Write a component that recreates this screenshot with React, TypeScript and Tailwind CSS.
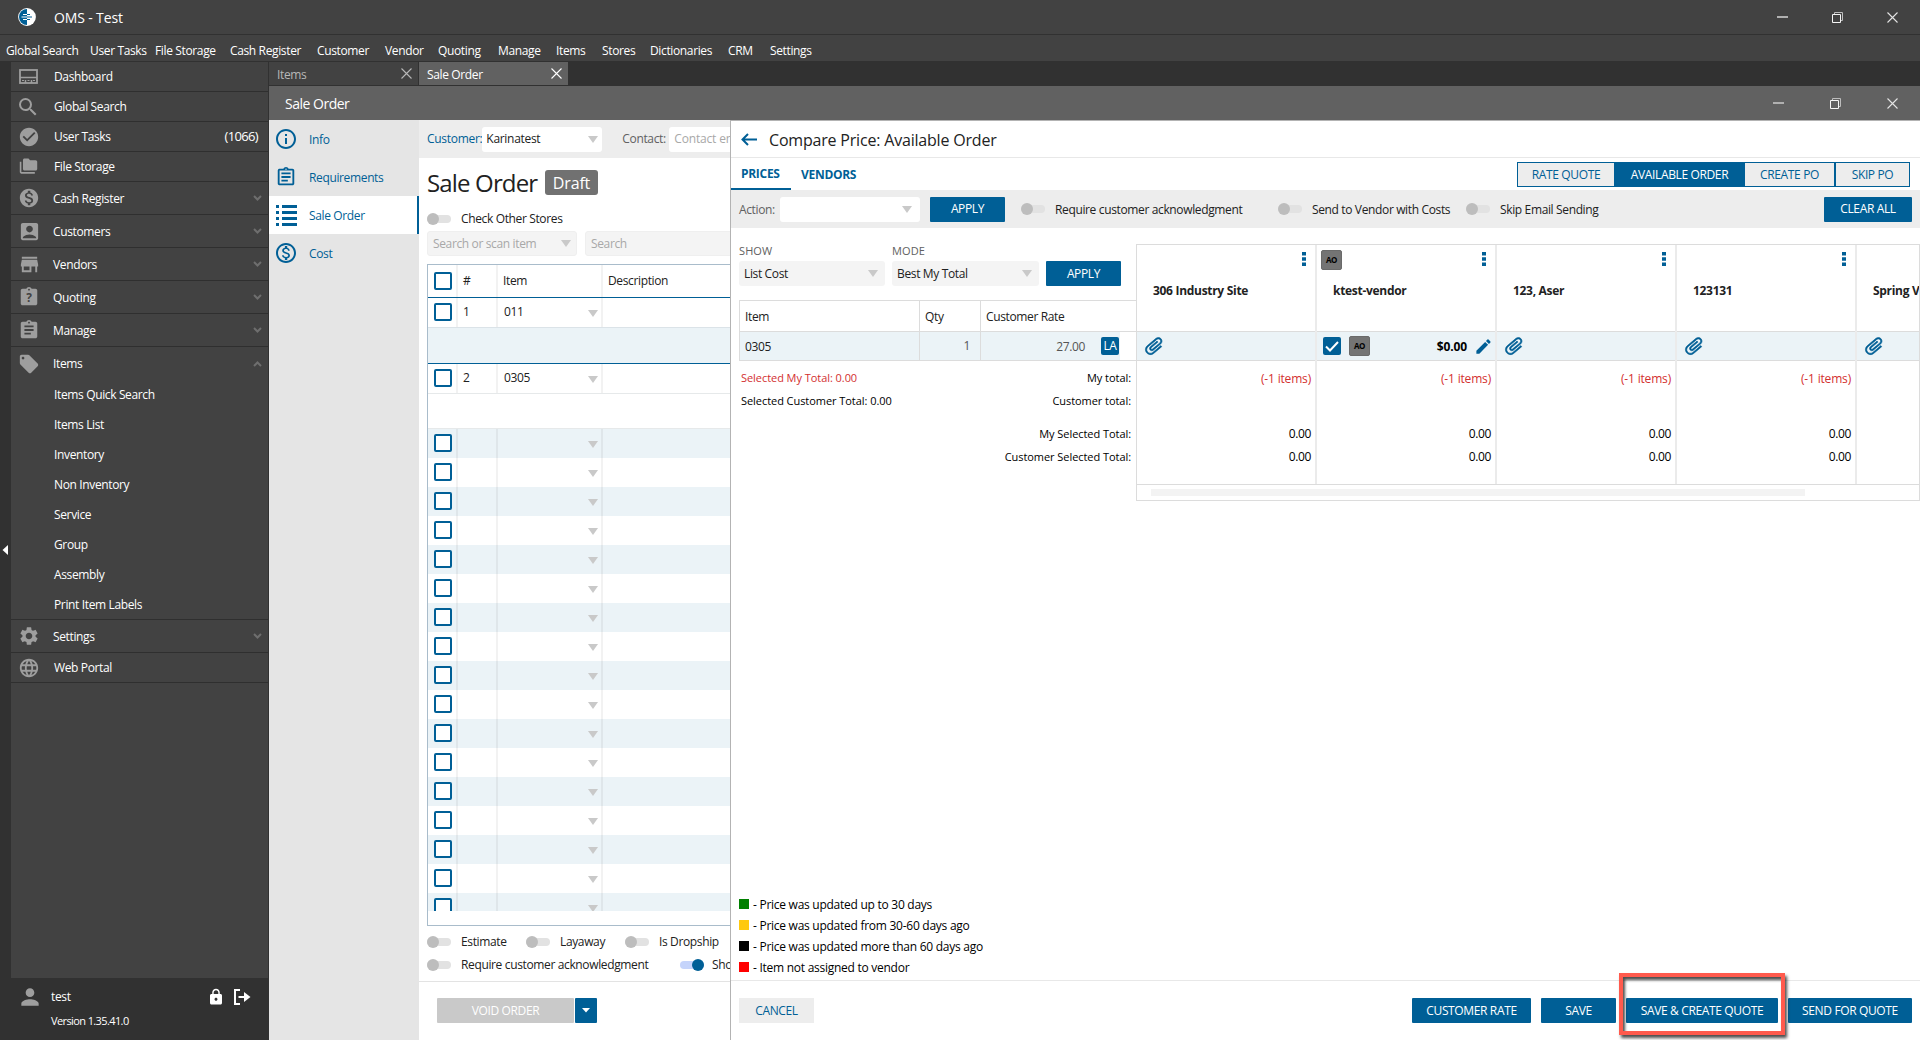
import type { ReactNode } from "react";
import clsx from "clsx";
import {
  MdSearch,
  MdCheckCircle,
  MdFolderCopy,
  MdMonetizationOn,
  MdAccountBox,
  MdStore,
  MdAssignment,
  MdLocalOffer,
  MdSettings,
  MdLanguage,
  MdInfoOutline,
  MdOutlineAssignment,
  MdOutlineMonetizationOn,
  MdPerson,
  MdLock,
  MdEdit,
} from "react-icons/md";

const MENU = [
  { label: "Global Search", width: "w-[84px]" },
  { label: "User Tasks", width: "w-[65px]" },
  { label: "File Storage", width: "w-[75px]" },
  { label: "Cash Register", width: "w-[87px]" },
  { label: "Customer", width: "w-[68px]" },
  { label: "Vendor", width: "w-[53px]" },
  { label: "Quoting", width: "w-[60px]" },
  { label: "Manage", width: "w-[58px]" },
  { label: "Items", width: "w-[46px]" },
  { label: "Stores", width: "w-[48px]" },
  { label: "Dictionaries", width: "w-[78px]" },
  { label: "CRM", width: "w-[42px]" },
  { label: "Settings", width: "w-[60px]" },
];

const ITEM_LINKS = [
  "Items Quick Search",
  "Items List",
  "Inventory",
  "Non Inventory",
  "Service",
  "Group",
  "Assembly",
  "Print Item Labels",
];

type Vendor = { name: string; selected?: boolean };

const VENDORS: Vendor[] = [
  { name: "306 Industry Site" },
  { name: "ktest-vendor", selected: true },
  { name: "123, Aser" },
  { name: "123131" },
];

const LEGEND = [
  { color: "bg-[#008000]", text: "- Price was updated up to 30 days" },
  { color: "bg-[#ffc90e]", text: "- Price was updated from 30-60 days ago" },
  { color: "bg-black", text: "- Price was updated more than 60 days ago" },
  { color: "bg-[#ff0000]", text: "- Item not assigned to vendor" },
];

function DashboardIcon() {
  return (
    <svg width="19" height="15" viewBox="0 0 19 15" fill="none" stroke="currentColor">
      <rect x="1" y="1" width="17" height="13" strokeWidth="1.8" />
      <path d="M1 8.500h17M6.500 11v3M12.500 11v3" strokeWidth="1.500" />
      <path d="M3 11.500h2M8.500 11.500h2M14 11.500h2" strokeWidth="1.200" />
    </svg>
  );
}

function QuotingIcon() {
  return (
    <svg width="22" height="22" viewBox="0 0 24 24" fill="currentColor">
      <path d="M19 3h-4.180C14.400 1.840 13.300 1 12 1c-1.300 0-2.400.840-2.820 2H5c-1.100 0-2 .900-2 2v14c0 1.100.900 2 2 2h14c1.100 0 2-.900 2-2V5c0-1.100-.900-2-2-2zm-7 0c.550 0 1 .450 1 1s-.450 1-1 1-1-.450-1-1 .450-1 1-1z" />
      <text x="12" y="17.500" textAnchor="middle" fontSize="13" fontWeight="700" fill="#424242">?</text>
    </svg>
  );
}

function ListIcon() {
  return (
    <svg width="21" height="21" viewBox="0 0 21 21" fill="currentColor">
      {[0, 6, 12, 18].map((y) => (
        <g key={y}>
          <rect x="0" y={y} width="3" height="3" />
          <rect x="6" y={y} width="15" height="3" />
        </g>
      ))}
    </svg>
  );
}

function LogoutIcon() {
  return (
    <svg width="17" height="16" viewBox="0 0 17 16" fill="none" stroke="currentColor" strokeWidth="2">
      <path d="M6 1H1v14h5" />
      <path d="M4.500 8H13" />
      <path d="M10 3 16.500 8 10 13z" fill="currentColor" stroke="none" />
    </svg>
  );
}

function LogoIcon() {
  return (
    <svg width="18" height="18" viewBox="0 0 18 18">
      <circle cx="9" cy="9" r="8.900" fill="#fff" />
      <path d="M9 1a8 8 0 0 0 0 16z" fill="#005f96" />
      <path d="M5 6.500h4M3.500 9H9M5 11.500h4" stroke="#fff" strokeWidth="1.200" />
      <path d="M9 6.500h3M9 9h5M9 11.500h3" stroke="#005f96" strokeWidth="1.200" />
    </svg>
  );
}

function CloseIcon() {
  return (
    <svg width="11" height="11" viewBox="0 0 11 11" stroke="currentColor" strokeWidth="1.100">
      <path d="M.5.5l10 10M10.500.5l-10 10" />
    </svg>
  );
}

function WindowButtons({ inner }: { inner?: boolean }) {
  return (
    <div className="ml-auto flex items-center pr-[22px] text-[#e4e4e4]">
      <span className={clsx("h-[2px] w-[11px] bg-[#b0b0b0]", inner ? "mr-[46px]" : "mr-[44px]")} />
      <svg
        width="11"
        height="11"
        viewBox="0 0 11 11"
        fill="none"
        stroke="#f5f5f5"
        className={inner ? "mr-[46px]" : "mr-[44px]"}
      >
        <path d="M2.500 2V.5h8v8H9" stroke="#bdbdbd" />
        <path d="M.5 2.500h8v8h-8z" />
      </svg>
      <CloseIcon />
    </div>
  );
}

function Caret({ className }: { className?: string }) {
  return (
    <svg width="10" height="7" viewBox="0 0 10 7" className={clsx("shrink-0", className ?? "text-[#c9c9c9]")}>
      <path d="M0 0h10L5 7z" fill="currentColor" />
    </svg>
  );
}

function Toggle({ on }: { on?: boolean }) {
  return (
    <span className="flex h-3 w-6 shrink-0 items-center">
      <span className={clsx("flex h-2 w-6 items-center rounded-full", on ? "justify-end bg-[#c5d4fb]" : "bg-[#e2e2e2]")}>
        <span className={clsx("h-3 w-3 shrink-0 rounded-full", on ? "bg-[#005f96]" : "bg-[#bdbdbd]")} />
      </span>
    </span>
  );
}

function Checkbox() {
  return <span className="block h-[18px] w-[18px] rounded-[2px] border-2 border-[#005f96] bg-white" />;
}

function Button({ children, className }: { children: ReactNode; className?: string }) {
  return (
    <button
      type="button"
      className={clsx("flex h-[25px] shrink-0 items-center justify-center rounded-[1px] bg-[#005f96] text-white", className)}
    >
      {children}
    </button>
  );
}

function SideRow({ icon, label, extra }: { icon: ReactNode; label: string; extra?: string }) {
  return (
    <div className="flex h-[30px] items-center border-b border-[#2f2f2f] pr-[10px] pl-2">
      <span className="flex w-[35px] text-[#9e9e9e]">{icon}</span>
      {label}
      {extra && <span className="ml-auto text-[13px] tracking-[-0.05em]">{extra}</span>}
    </div>
  );
}

function SideGroup({ icon, label, open }: { icon: ReactNode; label: string; open?: boolean }) {
  return (
    <div className={clsx("flex h-[33px] items-center pr-[6px] pl-[7px] font-medium", !open && "border-b border-[#2f2f2f]")}>
      <span className="flex w-[35px] text-[#9e9e9e]">{icon}</span>
      <span className={clsx(!open && "pt-[2px]")}>{label}</span>
      <svg width="9" height="6" viewBox="0 0 9 6" fill="none" stroke="#6e6e6e" strokeWidth="2" className="ml-auto">
        <path d={open ? "M1 5 4.500 1.500 8 5" : "M1 1 4.500 4.500 8 1"} />
      </svg>
    </div>
  );
}

function Sidebar() {
  return (
    <aside className="flex w-[269px] shrink-0 bg-[#313131] text-white">
      <div className="flex w-[11px] shrink-0 items-center">
        <svg width="6" height="10" viewBox="0 0 6 10" className="mb-[2px] ml-[2px]">
          <path d="M6 0v10L.5 5z" fill="#fff" />
        </svg>
      </div>
      <div className="flex w-[258px] flex-col">
        <nav className="h-[916px] w-[257px] bg-[#424242]">
          <SideRow icon={<DashboardIcon />} label="Dashboard" />
          <SideRow icon={<MdSearch size={24} className="-mx-[3px]" />} label="Global Search" />
          <SideRow icon={<MdCheckCircle size={22} className="-mx-px" />} label="User Tasks" extra="(1066)" />
          <SideRow icon={<MdFolderCopy size={19} />} label="File Storage" />
          <SideGroup icon={<MdMonetizationOn size={22} />} label="Cash Register" />
          <SideGroup icon={<MdAccountBox size={23} />} label="Customers" />
          <SideGroup icon={<MdStore size={23} />} label="Vendors" />
          <SideGroup icon={<QuotingIcon />} label="Quoting" />
          <SideGroup icon={<MdAssignment size={22} />} label="Manage" />
          <SideGroup icon={<MdLocalOffer size={22} />} label="Items" open />
          <div className="border-b border-[#2f2f2f]">
            {ITEM_LINKS.map((label, i) => (
              <div key={label} className={clsx("flex items-center pl-[43px]", i === 7 ? "h-[29px]" : "h-[30px]")}>
                {label}
              </div>
            ))}
          </div>
          <SideGroup icon={<MdSettings size={22} />} label="Settings" />
          <SideRow icon={<MdLanguage size={22} className="-mx-px" />} label="Web Portal" />
        </nav>
        <div className="pt-[9px] pl-2">
          <div className="flex h-5 items-center">
            <MdPerson size={26} className="-ml-[2px] text-[#9e9e9e]" />
            <span className="ml-[8px]">test</span>
            <span className="ml-auto flex items-center gap-[9px] pr-[18px]">
              <MdLock size={18} />
              <LogoutIcon />
            </span>
          </div>
          <div className="mt-[6px] pl-[32px] text-[11px] tracking-[-0.055em]">Version 1.35.41.0</div>
        </div>
      </div>
    </aside>
  );
}

function WindowTab({ label, active }: { label: string; active?: boolean }) {
  return (
    <div
      className={clsx(
        "flex h-[23px] items-center justify-between pr-[6px] pl-2",
        active ? "w-[149px] bg-[#616161] text-white" : "mr-px w-[149px] bg-[#424242] text-[#b8b8b8]",
      )}
    >
      <span className="pt-[2px]">{label}</span>
      <CloseIcon />
    </div>
  );
}

function OrderNav() {
  const links = [
    { label: "Info", icon: <MdInfoOutline size={24} className="-ml-[2px]" /> },
    { label: "Requirements", icon: <MdOutlineAssignment size={22} className="-ml-[1px]" /> },
    { label: "Sale Order", icon: <ListIcon />, active: true },
    { label: "Cost", icon: <MdOutlineMonetizationOn size={24} className="-ml-[2px]" /> },
  ];
  return (
    <nav className="w-[150px] shrink-0 bg-[#e5e5e5] font-medium text-[#005f96]">
      {links.map((l) => (
        <div
          key={l.label}
          className={clsx("flex h-[38px] items-center pl-[7px]", l.active && "border-r-2 border-[#005f96] bg-white")}
        >
          <span className="flex w-[33px]">{l.icon}</span>
          <span className="pt-[2px]">{l.label}</span>
        </div>
      ))}
    </nav>
  );
}

// One line of the order grid. Empty lines still show their checkbox and picker.
function OrderRow({ num, item, tint }: { num?: string; item?: string; tint?: boolean }) {
  return (
    <div className={clsx("flex h-[29px] shrink-0", tint ? "bg-[#ebf3f7]" : "bg-white")}>
      <div className="flex w-[30px] items-center border-r-2 border-black/5 pb-px pl-[6px]">
        <Checkbox />
      </div>
      <div className="flex w-10 items-center border-r-2 border-black/5 pb-px pl-[5px]">{num}</div>
      <div className="flex w-[105px] items-center justify-between border-r-2 border-black/5 pr-[3px] pb-px pl-[6px]">
        <span>{item}</span>
        <Caret className="mt-[2px] text-[#c9c9c9]" />
      </div>
    </div>
  );
}

function OrderForm() {
  return (
    <section className="flex w-[311px] shrink-0 flex-col overflow-hidden bg-white whitespace-nowrap">
      <div className="flex h-[38px] shrink-0 items-center bg-[#ededed] pl-2">
        <span className="w-14 font-medium tracking-[-0.025em] text-[#005f96]">Customer:</span>
        <div className="flex h-[25px] w-[120px] shrink-0 items-center justify-between rounded-[3px] bg-white pr-1 pl-1 tracking-[-0.025em]">
          Karinatest
          <Caret />
        </div>
        <span className="ml-5 w-[47px] shrink-0 text-[#616161]">Contact:</span>
        <div className="flex h-[25px] w-[120px] shrink-0 items-center rounded-[3px] bg-white pl-[5px] tracking-[-0.015em] text-[#a8a8a8]">
          Contact email
        </div>
      </div>
      <div className="mt-3 flex h-[25px] shrink-0 items-center pl-2">
        <h1 className="w-[118px] text-[24px] tracking-[-0.035em]">Sale Order</h1>
        <span className="flex h-[25px] w-[53px] items-center justify-center rounded-[3px] bg-[#717171] text-[16px] tracking-[-0.01em] text-white">
          Draft
        </span>
      </div>
      <div className="mt-[17px] flex h-[14px] shrink-0 items-center gap-[10px] pl-2">
        <Toggle />
        Check Other Stores
      </div>
      <div className="mt-[5px] flex shrink-0 gap-2 pl-2 text-[#a8a8a8]">
        <div className="flex h-[25px] w-[150px] shrink-0 items-center justify-between rounded-[3px] border border-[#efefef] bg-[#f4f4f4] px-[5px]">
          Search or scan item
          <Caret />
        </div>
        <div className="flex h-[25px] w-[200px] shrink-0 items-center rounded-[3px] border border-[#efefef] bg-[#f4f4f4] pl-[5px]">
          Search
        </div>
      </div>
      <div className="mt-2 ml-2 flex h-[662px] w-[400px] shrink-0 flex-col border border-[#a9bccb]">
        <div className="flex h-8 shrink-0">
          <div className="flex w-[30px] items-center border-r-2 border-black/5 pl-[6px]">
            <Checkbox />
          </div>
          <div className="flex w-10 items-center border-r-2 border-black/5 pl-[5px]">#</div>
          <div className="flex w-[105px] items-center border-r-2 border-black/5 pl-[5px]">Item</div>
          <div className="flex items-center pl-[5px]">Description</div>
        </div>
        <div className="shrink-0 border-y border-[#005f96]">
          <OrderRow num="1" item="011" />
          <div className="h-9 border-t border-[#dbe3e8] bg-[#ebf3f7]" />
        </div>
        <OrderRow num="2" item="0305" />
        <div className="h-9 shrink-0 border-y border-[#e6e9ea]" />
        <div className="h-[482px] shrink-0 overflow-hidden">
          {Array.from({ length: 17 }, (_, i) => (
            <OrderRow key={i} tint={i % 2 === 0} />
          ))}
        </div>
      </div>
      <div className="mt-[9px] flex h-[14px] shrink-0 items-center pl-2">
        <div className="flex w-[99px] items-center gap-[10px]"><Toggle />Estimate</div>
        <div className="flex w-[99px] items-center gap-[10px]"><Toggle />Layaway</div>
        <div className="flex items-center gap-[10px]"><Toggle />Is Dropship</div>
      </div>
      <div className="mt-[9px] flex h-[14px] shrink-0 items-center pl-2">
        <div className="flex w-[253px] shrink-0 items-center gap-[10px]"><Toggle />Require customer acknowledgment</div>
        <div className="flex items-center gap-[8px]"><Toggle on />Show</div>
      </div>
      <div className="mt-[9px] flex flex-1 gap-px border-t border-[#e3e3e3] pt-4 pl-[18px]">
        <span className="flex h-[25px] w-[137px] items-center justify-center rounded-[1px] bg-[#c9c9c9] text-white">
          VOID ORDER
        </span>
        <Button className="w-[22px]">
          <svg width="8" height="5" viewBox="0 0 8 5">
            <path d="M0 0h8L4 4.500z" fill="#fff" />
          </svg>
        </Button>
      </div>
    </section>
  );
}

function Select({ label, value, className }: { label: string; value: string; className: string }) {
  return (
    <div className={className}>
      <div className="flex h-5 items-center text-[11px] tracking-[0.01em] text-[#616161]">{label}</div>
      <div className="flex h-[25px] items-center justify-between rounded-[3px] bg-[#f4f4f4] pr-[7px] pl-[5px]">
        {value}
        <Caret />
      </div>
    </div>
  );
}

function AoBadge() {
  return (
    <span className="flex h-5 w-[21px] items-center justify-center rounded-[2px] border border-[#6a6a6a] bg-[#747474] text-[8px] font-bold text-black">
      AO
    </span>
  );
}

function Dots() {
  return (
    <svg width="4" height="14" viewBox="0 0 4 14" fill="#005f96">
      <path d="M0 0h4v3.600H0zM0 5.200h4v3.600H0zM0 10.400h4V14H0z" />
    </svg>
  );
}

function ClipIcon() {
  return (
    <svg width="22" height="22" viewBox="0 0 24 24" fill="#005f96" stroke="#005f96" strokeWidth="0.6" className="rotate-[50deg]">
      <path d="M16.5 6v11.5c0 2.21-1.79 4-4 4s-4-1.79-4-4V5c0-1.38 1.12-2.5 2.5-2.5s2.5 1.12 2.5 2.5v10.5c0 .55-.45 1-1 1s-1-.45-1-1V6H10v9.5c0 1.38 1.12 2.5 2.5 2.5s2.5-1.12 2.5-2.5V5c0-2.21-1.79-4-4-4S7 2.79 7 5v12.5c0 3.04 2.46 5.5 5.5 5.5s5.5-2.46 5.5-5.5V6h-1.5z" />
    </svg>
  );
}

function VendorColumn({ vendor }: { vendor: Vendor }) {
  return (
    <div className="flex w-[180px] shrink-0 flex-col border-r-2 border-black/8">
      <div className="h-[87px] border-b border-[#dcdcdc] pt-[5px]">
        <div className="flex h-5 items-start justify-between pr-[9px] pl-[4px]">
          {vendor.selected ? <AoBadge /> : <span />}
          <span className="pt-[2px]"><Dots /></span>
        </div>
        <div className="mt-[12px] pl-4 text-[12px] font-bold tracking-[-0.025em] text-[#222]">{vendor.name}</div>
      </div>
      <div className="flex h-[29px] items-center border-b border-[#dcdcdc] bg-[#ebf3f7] pl-[6px]">
        {vendor.selected ? (
          <>
            <span className="flex h-[18px] w-[18px] items-center justify-center rounded-[2px] bg-[#005f96]">
              <svg width="14" height="11" viewBox="0 0 14 11" fill="none" stroke="#fff" strokeWidth="2">
                <path d="M1 5.500 5 9.500 13 1" />
              </svg>
            </span>
            <span className="ml-2"><AoBadge /></span>
            <span className="ml-auto pt-px font-bold tracking-[-0.01em] text-black">$0.00</span>
            <MdEdit size={19} className="mr-[2px] ml-[7px] text-[#005f96]" />
          </>
        ) : (
          <ClipIcon />
        )}
      </div>
      <div className="flex h-[123px] flex-col items-end pt-[8px] pr-1 leading-[18px] font-medium text-black">
        <span className="pt-px font-normal tracking-[-0.015em] text-[#d32f2f]">(-1 items)</span>
        <span className="mt-[37px]">0.00</span>
        <span className="mt-[5px]">0.00</span>
      </div>
    </div>
  );
}

function ComparePanel() {
  return (
    <section className="flex w-[1190px] flex-col border-t border-l border-[#b3b3b3] bg-white whitespace-nowrap">
      <header className="flex h-[37px] shrink-0 items-center border-b border-[#e8e8e8] pl-[10px]">
        <svg width="16" height="13" viewBox="0 0 16 13" fill="none" stroke="#005f96" strokeWidth="2">
          <path d="M16 6.500H2M7 1 1.500 6.500 7 12" />
        </svg>
        <h2 className="ml-3 pt-[2px] text-[16px] tracking-[-0.012em] text-[#222]">Compare Price: Available Order</h2>
      </header>

      <div className="flex h-8 shrink-0 items-center pr-[10px] text-[#005f96]">
        <span className="flex h-8 w-[60px] items-center border-b-2 border-[#005f96] pt-px pl-[10px] text-[12px] font-bold tracking-[-0.025em]">
          PRICES
        </span>
        <span className="ml-[10px] pt-[2px] text-[12px] font-bold tracking-[-0.025em]">VENDORS</span>
        <div className="ml-auto flex h-[25px] border border-[#005f96] bg-[#ededed]">
          <span className="flex w-[96px] items-center justify-center pt-px">RATE QUOTE</span>
          <span className="flex w-[131px] items-center justify-center bg-[#005f96] pt-px text-white">AVAILABLE ORDER</span>
          <span className="flex w-[91px] items-center justify-center border-r-2 border-[#005f96] pt-px">CREATE PO</span>
          <span className="flex w-[73px] items-center justify-center pt-px">SKIP PO</span>
        </div>
      </div>

      <div className="flex h-[38px] shrink-0 items-center bg-[#ededed] pr-2 pl-2">
        <span className="w-[41px] pt-[2px] text-[#616161]">Action:</span>
        <div className="flex h-[25px] w-[140px] items-center justify-end rounded-[3px] bg-white pr-2">
          <Caret />
        </div>
        <Button className="ml-[10px] w-[75px]">APPLY</Button>
        <div className="ml-4 flex w-[257px] items-center gap-[10px]">
          <Toggle /><span className="pt-[2px]">Require customer acknowledgment</span>
        </div>
        <div className="flex w-[188px] items-center gap-[10px]">
          <Toggle /><span className="pt-[2px]">Send to Vendor with Costs</span>
        </div>
        <div className="flex items-center gap-[10px]">
          <Toggle /><span className="pt-[2px]">Skip Email Sending</span>
        </div>
        <Button className="ml-auto w-[88px]">CLEAR ALL</Button>
      </div>

      <div className="flex flex-1 pt-4">
        <div className="w-[405px] shrink-0 pl-2">
          <div className="-mt-[3px] flex items-end">
            <Select label="SHOW" value="List Cost" className="w-[146px]" />
            <Select label="MODE" value="Best My Total" className="ml-[7px] w-[147px]" />
            <Button className="ml-[7px] w-[75px]">APPLY</Button>
          </div>
          <div className="mt-[14px] border-y border-l border-[#dcdcdc]">
            <div className="flex h-[31px] border-b border-[#dcdcdc]">
              <span className="flex w-[180px] items-center border-r border-[#dcdcdc] pt-px pl-[5px]">Item</span>
              <span className="flex w-[61px] items-center border-r border-[#dcdcdc] pt-px pl-[5px]">Qty</span>
              <span className="flex items-center pt-px pl-[5px]">Customer Rate</span>
            </div>
            <div className="flex h-[28px]">
              <span className="flex w-[180px] items-center border-r border-[#dcdcdc] bg-[#ebf3f7] pt-px pl-[5px]">0305</span>
              <span className="flex w-[61px] items-center justify-end border-r border-[#dcdcdc] bg-[#ebf3f7] pr-[10px] text-[#555]">1</span>
              <span className="flex w-[139px] items-center justify-end bg-[#ebf3f7] pr-px text-[#555]">
                <span className="pt-[2px]">27.00</span>
                <span className="ml-[16px] flex h-[18px] w-[18px] items-center justify-center rounded-[2px] bg-[#005f96] text-[12px] text-white">
                  LA
                </span>
              </span>
            </div>
          </div>
          <div className="flex justify-between pt-[8px] pr-[5px] pl-[2px] text-[11px] leading-[18px] font-medium tracking-[-0.005em] text-black">
            <div>
              <div className="text-[#d32f2f]">Selected My Total: 0.00</div>
              <div className="mt-[5px]">Selected Customer Total: 0.00</div>
            </div>
            <div className="text-right">
              <div>My total:</div>
              <div className="mt-[5px]">Customer total:</div>
              <div className="mt-[15px]">My Selected Total:</div>
              <div className="mt-[5px]">Customer Selected Total:</div>
            </div>
          </div>
        </div>

        <div className="h-[257px] w-[784px] overflow-hidden border border-[#dcdcdc]">
          <div className="flex h-[240px] border-b border-[#dcdcdc]">
            {VENDORS.map((v) => (
              <VendorColumn key={v.name} vendor={v} />
            ))}
            <div className="flex w-[180px] shrink-0 flex-col">
              <div className="h-[87px] border-b border-[#dcdcdc] pt-[37px] pl-4 font-bold tracking-[-0.025em] text-[#222]">
                Spring Valley
              </div>
              <div className="flex h-[29px] items-center border-b border-[#dcdcdc] bg-[#ebf3f7] pl-[6px]">
                <ClipIcon />
              </div>
            </div>
          </div>
          <div className="mt-[4px] ml-[14px] h-[7px] w-[654px] bg-[#f3f3f3]" />
        </div>
      </div>

      <ul className="shrink-0 pb-[2px] pl-2 tracking-[-0.022em] text-black">
        {LEGEND.map((l) => (
          <li key={l.text} className="flex h-[21px] items-center">
            <span className={clsx("mr-[4px] mb-[2px] h-[10px] w-[10px]", l.color)} />
            {l.text}
          </li>
        ))}
      </ul>

      <footer className="flex h-[60px] shrink-0 items-start gap-[10px] border-t border-[#e8e8e8] pt-[17px] pr-2 pl-2">
        <button type="button" className="mr-auto flex h-[25px] w-[75px] items-center justify-center bg-[#ededed] text-[#005f96]">
          CANCEL
        </button>
        <Button className="w-[119px]">CUSTOMER RATE</Button>
        <Button className="w-[75px]">SAVE</Button>
        <div className="relative">
          <Button className="w-[152px]">SAVE &amp; CREATE QUOTE</Button>
          <span className="absolute -top-[25px] -left-[7px] h-[62px] w-[166px] border-4 border-[#ff5a4d] shadow-[2px_3px_3px_rgba(0,0,0,0.7),inset_2px_3px_3px_rgba(0,0,0,0.7)]" />
        </div>
        <Button className="w-[124px]">SEND FOR QUOTE</Button>
      </footer>
    </section>
  );
}

export default function App() {
  return (
    <div className="flex h-[1040px] w-[1920px] flex-col overflow-hidden bg-[#313131] font-['Open_Sans','Noto_Sans',sans-serif] text-[12px] tracking-[-0.03em] text-[#212121]">
      <header className="flex h-[35px] shrink-0 items-center border-b border-[#313131] bg-[#424242] pl-[18px] text-white">
        <LogoIcon />
        <span className="ml-[18px] text-[14px] tracking-[-0.01em]">OMS - Test</span>
        <WindowButtons />
      </header>
      <div className="flex h-[26px] shrink-0 items-center bg-[#424242] pt-[6px] pl-[6px] text-white">
        {MENU.map((m) => (
          <span key={m.label} className={clsx("whitespace-nowrap", m.width)}>{m.label}</span>
        ))}
      </div>
      <div className="mt-px flex min-h-0 flex-1">
        <Sidebar />
        <div className="flex min-w-0 flex-1 flex-col">
          <div className="flex h-6 shrink-0">
            <WindowTab label="Items" />
            <WindowTab label="Sale Order" active />
          </div>
          <div className="flex h-[34px] shrink-0 items-center bg-[#616161] pl-4 text-[14px] tracking-[-0.035em] text-white">
            Sale Order
            <WindowButtons inner />
          </div>
          <div className="flex min-h-0 flex-1">
            <OrderNav />
            <OrderForm />
            <ComparePanel />
          </div>
        </div>
      </div>
    </div>
  );
}
